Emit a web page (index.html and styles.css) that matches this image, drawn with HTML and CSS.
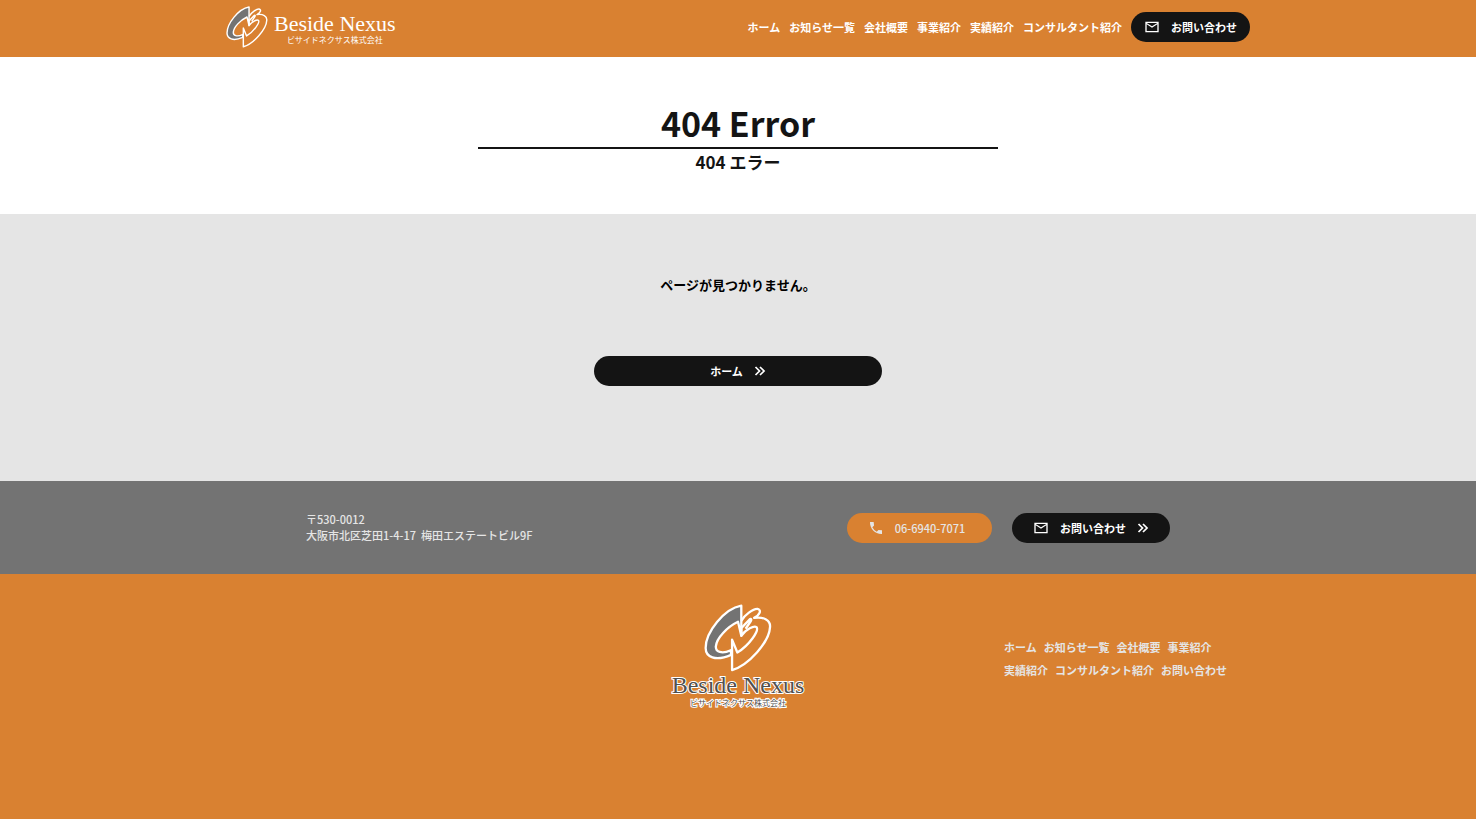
FILE: index.html
```html
<!DOCTYPE html>
<html lang="ja">
<head>
<meta charset="utf-8">
<meta name="viewport" content="width=device-width, initial-scale=1">
<title>404 Error | Beside Nexus</title>
<link rel="stylesheet" href="styles.css">
</head>
<body>
<svg class="defs" aria-hidden="true">
  <symbol id="mark" viewBox="134 28 206 206">
    <path class="mark-fill" d="M247 33C195 42 139 114 139 161C139 188 168 203 216 182L215 168C188 181 168 173 170 156C172 131 204 98 237 82L247 124Z"/>
    <path class="mark-line" d="M247 79C256 62 283 42 296 43C309 46 304 60 286 70C316 66 336 77 334 98C332 142 270 213 219 228V136L235 175C272 152 302 108 293 98C285 93 262 104 247 124V101L272 75C277 71 279 75 275 81L260 103"/>
  </symbol>
  <symbol id="mail" viewBox="0 0 24 24">
    <path fill="currentColor" d="M22 4H2v16h20V4zm-2 14H4V8l8 5 8-5v10zm-8-7L4 6h16l-8 5z"/>
  </symbol>
  <symbol id="phone" viewBox="0 0 24 24">
    <path fill="currentColor" d="M21 15.500l-5.300-.6-2.600 2.600a15 15 0 0 1-6.600-6.600l2.600-2.600L8.500 3H3C2.500 13 11 21.500 21 21z"/>
  </symbol>
  <symbol id="chevrons" viewBox="0 0 24 24">
    <path fill="none" stroke="currentColor" stroke-width="3.500" d="M3 4l8 8-8 8M12 4l8 8-8 8"/>
  </symbol>
</svg>

<header class="header">
  <div class="header-inner">
    <a class="logo" href="#">
      <svg class="logo-mark" aria-hidden="true"><use href="#mark"/></svg>
      <span class="logo-text">
        <span class="logo-name">Beside Nexus</span>
        <span class="logo-sub">ビサイドネクサス株式会社</span>
      </span>
    </a>
    <nav class="nav" aria-label="メイン">
      <a href="#">ホーム</a>
      <a href="#">お知らせ一覧</a>
      <a href="#">会社概要</a>
      <a href="#">事業紹介</a>
      <a href="#">実績紹介</a>
      <a href="#">コンサルタント紹介</a>
      <a class="pill pill-header" href="#"><svg class="icon icon-mail" aria-hidden="true"><use href="#mail"/></svg>お問い合わせ</a>
    </nav>
  </div>
</header>

<main>
  <section class="hero">
    <h1 class="hero-title">404 Error</h1>
    <p class="hero-sub">404 エラー</p>
  </section>
  <section class="content">
    <p class="message">ページが見つかりません。</p>
    <a class="pill pill-home" href="#">ホーム<svg class="icon" aria-hidden="true"><use href="#chevrons"/></svg></a>
  </section>
</main>

<footer>
  <div class="contact">
    <div class="contact-inner">
      <address class="address">〒530-0012<br>大阪市北区芝田1-4-17&nbsp; 梅田エステートビル9F</address>
      <div class="contact-links">
        <a class="pill pill-phone" href="tel:06-6940-7071"><svg class="icon icon-phone" aria-hidden="true"><use href="#phone"/></svg>06-6940-7071</a>
        <a class="pill pill-contact" href="#"><svg class="icon icon-mail" aria-hidden="true"><use href="#mail"/></svg>お問い合わせ<svg class="icon" aria-hidden="true"><use href="#chevrons"/></svg></a>
      </div>
    </div>
  </div>
  <div class="footer">
    <div class="footer-inner">
      <a class="footer-logo" href="#">
        <svg class="footer-mark" aria-hidden="true"><use href="#mark"/></svg>
        <span class="footer-name">Beside Nexus</span>
        <span class="footer-sub">ビサイドネクサス株式会社</span>
      </a>
      <nav class="footer-nav" aria-label="フッター">
        <a href="#">ホーム</a>
        <a href="#">お知らせ一覧</a>
        <a href="#">会社概要</a>
        <a href="#">事業紹介</a>
        <a href="#">実績紹介</a>
        <a href="#">コンサルタント紹介</a>
        <a href="#">お問い合わせ</a>
      </nav>
    </div>
  </div>
</footer>
</body>
</html>
```
FILE: styles.css
```css
:root {
  --orange: #d98131;
  --black: #141414;
  --gray: #737373;
  --light: #e5e5e5;
}

* { box-sizing: border-box; }

body {
  display: flex;
  flex-direction: column;
  min-height: 100vh;
  margin: 0;
  background: var(--orange);
  color: var(--black);
  font: 600 11px/16px "Noto Sans CJK JP", sans-serif;
}

a { color: inherit; text-decoration: none; }
p, h1 { margin: 0; }

.defs { position: absolute; width: 0; height: 0; }

.mark-fill { fill: var(--gray); stroke: #fff; stroke-width: 7; stroke-linejoin: round; }
.mark-line { fill: none; stroke: #fff; stroke-width: 7; stroke-linejoin: round; }

.header { background: var(--orange); color: #fff; }

.header-inner {
  display: flex;
  align-items: center;
  justify-content: space-between;
  max-width: 1024px;
  min-height: 57px;
  margin: 0 auto;
  padding-bottom: 3px;
}

.logo { display: flex; align-items: center; gap: 6px; }
.logo-mark { width: 42px; height: 42px; }
.logo-text { display: flex; flex-direction: column; align-items: center; }
.logo-name { font: 400 22px/25px "Liberation Serif", serif; }
.logo-sub { font-weight: 400; font-size: 8px; line-height: 8px; }

.nav { display: flex; align-items: center; gap: 9px; font-weight: 700; }

.pill {
  display: flex;
  align-items: center;
  justify-content: center;
  gap: 11px;
  height: 30px;
  border-radius: 15px;
  background: var(--black);
  color: #fff;
  font-weight: 700;
  white-space: nowrap;
}

.icon { width: 12px; height: 12px; flex: none; }
.icon-mail { width: 16px; height: 16px; }
.icon-phone { width: 16px; height: 16px; }
.pill-header { padding: 0 13px; gap: 11px; }

.hero {
  display: flex;
  flex-direction: column;
  align-items: center;
  padding: 42px 16px 40px;
  background: #fff;
}

.hero-title {
  width: 520px;
  max-width: 100%;
  padding-bottom: 1px;
  border-bottom: 2px solid var(--black);
  font-size: 34px;
  line-height: 47px;
  text-align: center;
}

.hero-sub { font-size: 17px; line-height: 25px; }

.content {
  display: flex;
  flex-direction: column;
  align-items: center;
  gap: 60px;
  padding: 60px 16px 95px;
  background: var(--light);
}

.message { color: #000; font-size: 13px; font-weight: 700; line-height: 22px; }
.pill-home { width: 288px; max-width: 100%; }

.contact { background: var(--gray); color: var(--light); }

.contact-inner {
  display: flex;
  align-items: center;
  justify-content: space-between;
  max-width: 864px;
  min-height: 93px;
  margin: 0 auto;
}

.address { font-style: normal; font-weight: 500; padding-bottom: 1px; }
.contact-links { display: flex; gap: 20px; }
.pill-phone { width: 145px; padding-right: 6px; background: var(--orange); color: var(--light); font-weight: 500; }
.pill-contact { width: 158px; }

.footer { padding: 30px 0 110px; color: var(--light); }

.footer-inner {
  display: grid;
  grid-template-columns: 1fr auto 1fr;
  align-items: center;
  max-width: 1024px;
  margin: 0 auto;
}

.footer-logo { grid-column: 2; display: flex; flex-direction: column; align-items: center; }
.footer-mark { width: 68px; height: 68px; }

.footer-name,
.footer-sub {
  color: #505050;
  -webkit-text-stroke: 2px #fff;
  paint-order: stroke fill;
}

.footer-name { font: 400 24px/27px "Liberation Serif", serif; }
.footer-sub { font-weight: 400; font-size: 8px; line-height: 8px; }

.footer-nav {
  display: flex;
  flex-wrap: wrap;
  justify-self: end;
  gap: 7px;
  width: 246px;
  padding: 6px 20px 0 0;
}
```
